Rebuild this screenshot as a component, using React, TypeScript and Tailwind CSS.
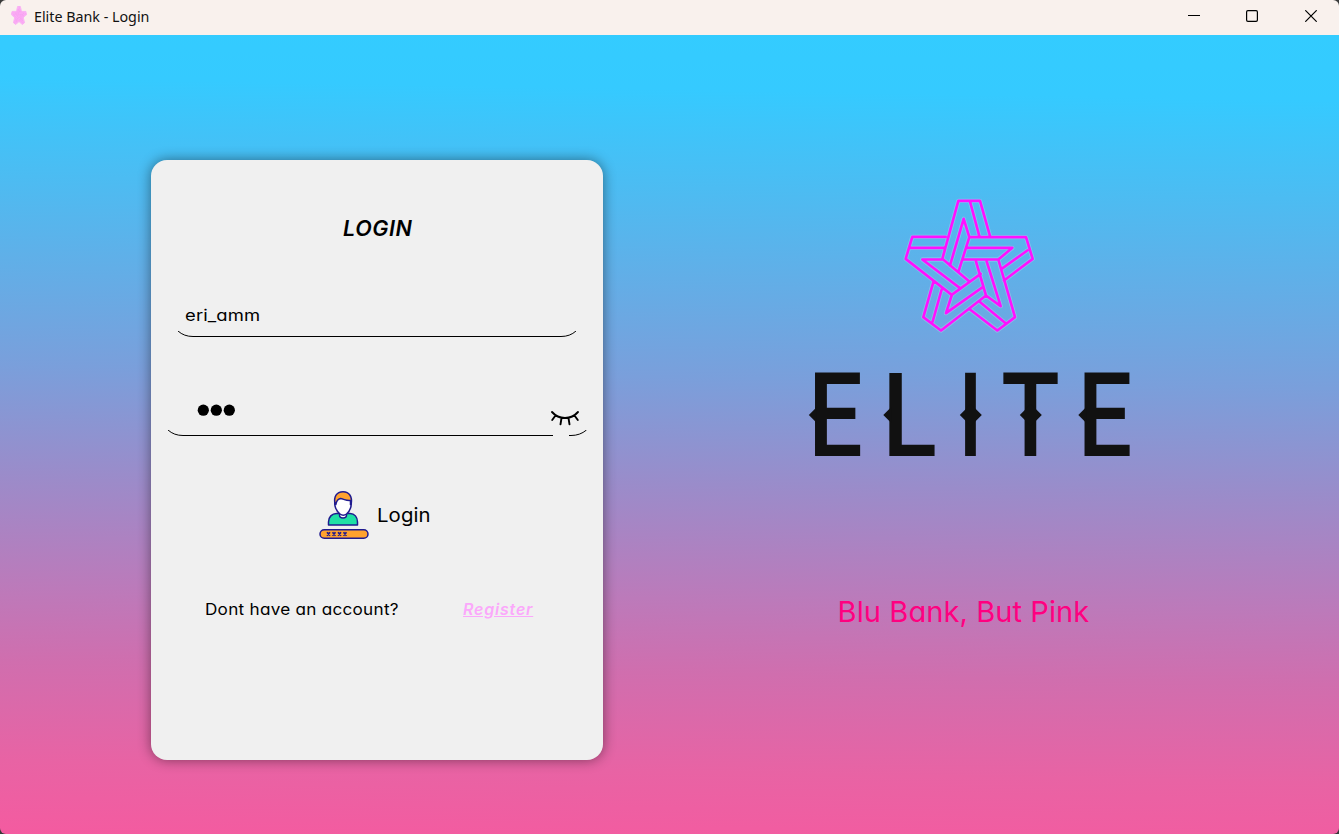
import React from "react";

const starLines =
  "M157 220 205 46H270L300 152M240 48 268 152M180 240 221 100 238 155 205 260M157 220 238 288" +
  "M238 155H408L428 220 342 285M232 187H367L325 222H220M412 195 335 250" +
  "M325 222 375 395 322 435 240 372M290 228 332 362 288 330M258 228 288 330M268 348 345 412" +
  "M288 330 153 435 100 395 130 290M185 330 168 383 278 305M185 328 272 265M155 312 128 408" +
  "M167 154H67L47 220 185 328M60 187H163M155 222H97L210 308";

function StarLogo() {
  return (
    <svg className="size-40" viewBox="0 -1.5 480 480" fill="none" strokeLinejoin="round" strokeLinecap="round">
      <path d={starLines} stroke="#ffffff" strokeOpacity="0.22" strokeWidth="13" />
      <path d={starLines} stroke="#ff10ff" strokeWidth="8" />
    </svg>
  );
}

function StarIcon() {
  return (
    <svg className="ml-[11px] h-[19px] w-4" viewBox="38 36 400 410" preserveAspectRatio="none" fill="#fbb0f6" strokeLinejoin="round">
      <path d="M205 46H270L300 152H408L428 220 342 285 375 395 322 435 240 372 153 435 100 395 130 290 47 220 67 153H175Z" stroke="#fbc4f7" strokeWidth="20" />
      <path d={starLines} fill="none" stroke="#f694ee" strokeWidth="8" />
    </svg>
  );
}

const letters = [
  { ch: "E", x: 14.5, w: 46, diamond: 19.5, right: false },
  { ch: "L", x: 89, w: 46, diamond: 94, right: false },
  { ch: "I", x: 165, w: 11, diamond: 170.5, right: true },
  { ch: "T", x: 203, w: 55, diamond: 230.5, right: true },
  { ch: "E", x: 284, w: 46, diamond: 289, right: false },
];

const glyphBox: Record<string, { left: number; width: number }> = {
  E: { left: 8.2, width: 55 },
  L: { left: 8.2, width: 52.5 },
  I: { left: 9.5, width: 14.5 },
  T: { left: 2.4, width: 66.5 },
};

function Wordmark() {
  return (
    <svg className="h-[110px] w-[350px] overflow-visible" viewBox="0 0 350 110" fill="#111111">
      {letters.map((l, i) => {
        const box = glyphBox[l.ch];
        const s = l.w / box.width;
        const d = l.diamond;
        return (
          <g key={i} transform="translate(5.3 0)">
            <text
              transform={`translate(${l.x - box.left * s} 96) scale(${s} 1)`}
              className="font-['Roboto'] text-[116px] leading-none font-medium"
            >
              {l.ch}
            </text>
            <path d={l.right ? `M${d - 11} 55 ${d} 44 ${d + 11} 55 ${d} 66Z` : `M${d - 11} 55 ${d - 3} 47V63Z`} />
          </g>
        );
      })}
    </svg>
  );
}

function LoginIcon() {
  return (
    <svg className="h-[50px] w-[50px]" viewBox="0 0 50 50" fill="none" stroke="#1f1a8f" strokeWidth="1.5" strokeLinejoin="round">
      <path d="M9.500 35V32C9.500 27 13 23.500 17.500 23.500H31C35.500 23.500 38.500 27 38.500 32V35Z" fill="#1fe0a5" />
      <path d="M20.500 22V25C20.500 29 27.500 29 27.500 25V22Z" fill="#fff" />
      <path d="M16 11.500C15 15 17 21 21 24C23 25.500 25.500 25.500 27.500 24C31 21 33 16 32 10L24 6Z" fill="#fff" />
      <path d="M16 14C14.500 7 17.500 1.700 24 1.700S33.500 7 32.200 14L31.500 14.500V10.500C27.500 11 24.500 9 21.500 8.500 18.500 9 17.500 11 16.800 14.500Z" fill="#ffa22f" />
      <rect x="1" y="39.700" width="48" height="8.600" rx="4.300" fill="#ffa22f" />
      <path d="M8 42.300 11 45.700M11 42.300 8 45.700M13.500 42.300 16.500 45.700M16.500 42.300 13.500 45.700M19 42.300 22 45.700M22 42.300 19 45.700M24.500 42.300 27.500 45.700M27.500 42.300 24.500 45.700" strokeWidth="1.700" />
    </svg>
  );
}

export default function App() {
  return (
    <div className="h-[834px] w-[1339px] overflow-hidden bg-[#3a3a3a] font-['Inter',sans-serif] text-black [font-feature-settings:'cv11']">
      <div className="flex h-full flex-col overflow-hidden rounded-[6px]">
        <header className="flex h-[35px] shrink-0 items-center bg-[#f9f1ed] pb-1">
          <StarIcon />
          <span className="ml-[7px] inline-block w-[130px] origin-left scale-x-[0.952] pt-px font-['Noto_Sans',sans-serif] text-[15px] leading-5 whitespace-nowrap text-[#111]">
            Elite Bank - Login
          </span>
          <div className="ml-auto flex items-center pr-[22px] text-black">
            <svg className="mr-[46px] size-3" viewBox="0 0 12 12" stroke="currentColor"><path d="M0 5.500H12" /></svg>
            <svg className="mr-[47px] size-3" viewBox="0 0 12 12" fill="none" stroke="currentColor" strokeWidth="1.200"><rect x="0.600" y="0.600" width="10.800" height="10.800" rx="1.300" /></svg>
            <svg className="size-3" viewBox="0 0 12 12" stroke="currentColor" strokeWidth="1.200"><path d="M0.300 0.300 11.700 11.700M11.700 0.300 0.300 11.700" /></svg>
          </div>
        </header>

        <main className="flex flex-1 bg-[linear-gradient(181deg,#33ccff_0%,#35caff_8%,#4cbcf2_20%,#7a9fdb_43%,#9a8cca_56%,#bc7aba_70%,#d06eae_79%,#e863a4_91%,#f45ba0_100%)] pt-[125px] pl-[151px]">
          <section className="flex h-[600px] w-[452px] flex-col rounded-2xl bg-[#f0f0f0] shadow-[0_0_13px_0_rgba(0,0,0,0.46)]">
            <h1 className="mt-[54px] ml-[192px] text-[21.5px] leading-7 font-semibold tracking-[0.6px] italic">LOGIN</h1>
            <div className="mt-[58px] ml-[26px] h-[37px] w-[400px]">
              <p className="w-[200px] origin-left scale-x-[1.15] pt-[3px] pl-[7px] text-base leading-6 font-normal tracking-[0.1px]">eri_amm</p>
              <svg className="mt-1 h-[7px] w-[400px]" viewBox="0 0 400 7" fill="none" stroke="#000">
                <path d="M1 0Q7 5.500 16 5.500H384Q393 5.500 399 0" />
              </svg>
            </div>
            <div className="mt-[60px] ml-4 h-[41px] w-[421px]">
              <div className="flex h-[33px] items-start">
                <svg className="mt-[7px] ml-[30px] h-3 w-[39px]" viewBox="0 0 39 12">
                  <circle cx="6.300" cy="6.200" r="5.600" />
                  <circle cx="19.300" cy="6.200" r="5.600" />
                  <circle cx="32.300" cy="6.200" r="5.600" />
                </svg>
                <svg className="mt-[13px] mr-[8px] ml-auto h-4 w-[30px]" viewBox="0 0 30 16" fill="none" stroke="#000" strokeWidth="1.900" strokeLinecap="round">
                  <path d="M2 2C9 10 21 10 28 2M5.500 5.500 2.200 10M11.500 8 10.500 14.300M18.500 8 19.500 14.300M24.500 5.500 27.800 10" />
                </svg>
              </div>
              <svg className="h-[7px] w-[421px]" viewBox="0 0 421 7" fill="none" stroke="#000">
                <path d="M1 0Q7 5.500 16 5.500H386M402 5.500H404Q413 5.500 419.500 0" />
              </svg>
            </div>
            <div className="mt-[52px] ml-[168px] flex h-[50px]">
              <LoginIcon />
              <span className="ml-[8px] origin-left scale-x-[1.07] pt-[12px] text-[19px] leading-7 font-normal tracking-[0.1px]">Login</span>
            </div>
            <div className="mt-[57px] ml-[54px] flex items-center text-base leading-6">
              <span className="w-[258px] origin-left scale-x-[1.07] font-normal tracking-[0.25px]">Dont have an account?</span>
              <a className="font-semibold tracking-[0.800px] text-[#fba8fb] italic underline">Register</a>
            </div>
          </section>

          <section className="ml-[192px] flex w-[350px] flex-col items-center pt-[25px]">
            <StarLogo />
            <div className="mt-[15px]"><Wordmark /></div>
            <p className="mt-[121px] mr-[13px] text-[29px] leading-[42px] font-normal tracking-[0.100px] whitespace-nowrap text-[#ff0080]">Blu Bank, But Pink</p>
          </section>
        </main>
      </div>
    </div>
  );
}
